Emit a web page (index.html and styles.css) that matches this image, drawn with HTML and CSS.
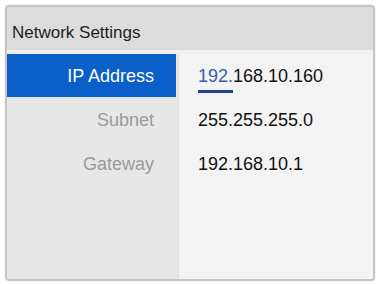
FILE: index.html
```html
<!DOCTYPE html>
<html lang="en">
<head>
    <meta charset="UTF-8">
    <meta name="viewport" content="width=device-width, initial-scale=1.0">
    <title>Network Settings</title>
    <link rel="stylesheet" href="styles.css">
</head>
<body>
    <!-- Network settings panel -->
    <div class="panel">
        <div class="panel-header">Network Settings</div>
        <div class="panel-body">
            <div class="labels">
                <div class="row label active">IP Address</div>
                <div class="row label">Subnet</div>
                <div class="row label">Gateway</div>
            </div>
            <div class="values">
                <div class="row value"><span class="edit">192.</span>168.10.160</div>
                <div class="row value">255.255.255.0</div>
                <div class="row value">192.168.10.1</div>
            </div>
        </div>
    </div>
</body>
</html>
```

FILE: styles.css
```css
body {
    margin: 0;
    padding: 5px;
    background: #ffffff;
    font-family: "Liberation Sans", Arial, sans-serif;
}
.panel {
    width: 370px;
    height: 276px;
    box-sizing: border-box;
    border: 2px solid #c4c4c4;
    border-radius: 4px;
    overflow: hidden;
    display: flex;
    flex-direction: column;
    box-shadow: 0 0 2px rgba(0, 0, 0, 0.15);
}
.panel-header {
    height: 47px;
    box-sizing: border-box;
    padding: 8px 0 0 5px;
    display: flex;
    align-items: center;
    background: #dcdcdc;
    color: #1e1e1e;
    font-size: 17px;
    border-bottom: 4px solid #f1f0ec;
}
.panel-body {
    flex: 1;
    display: flex;
}
.labels {
    width: 171px;
    background: #e7e7e7;
    border-right: 1px solid #dedede;
    box-shadow: 1px 0 2px rgba(0, 0, 0, 0.06);
}
.values {
    flex: 1;
    background: #f3f3f3;
}
.row {
    height: 44px;
    line-height: 44px;
    font-size: 18px;
}
.label {
    width: 169px;
    box-sizing: border-box;
    padding-right: 22px;
    text-align: right;
    color: #9a9a9a;
}
.label.active {
    height: 43px;
    margin-bottom: 1px;
    background: #0b5fc9;
    color: #ffffff;
}
.value {
    padding-left: 19px;
    color: #111111;
}
.edit {
    display: inline-block;
    line-height: normal;
    padding-bottom: 3px;
    border-bottom: 3px solid #23408c;
    color: #3a5ea6;
}
```
